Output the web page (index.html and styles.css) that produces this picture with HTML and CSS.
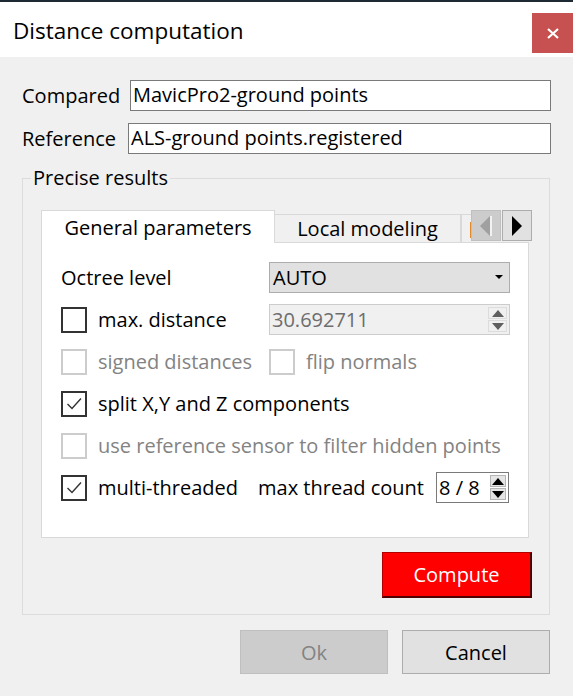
FILE: index.html
```html
<!DOCTYPE html>
<html>
<head>
<meta charset="utf-8">
<link rel="stylesheet" href="styles.css">
</head>
<body>
<div class="window">
  <div class="topstrip"></div>
  <header class="titlebar">
    <span class="title">Distance computation</span>
    <div class="close"><svg width="12" height="11" viewBox="0 0 12 11"><path d="M1 1 L11 10 M11 1 L1 10" stroke="#fff" stroke-width="2.2" fill="none"/></svg></div>
  </header>
  <main class="body">
    <div class="field-row">
      <span class="field-label compared">Compared</span>
      <div class="textbox">MavicPro2-ground points</div>
    </div>
    <div class="field-row second">
      <span class="field-label">Reference</span>
      <div class="textbox">ALS-ground points.registered</div>
    </div>

    <section class="group">
      <span class="group-title">Precise results</span>
      <div class="tabs">
        <div class="tabbar">
          <div class="tab selected">General parameters</div>
          <div class="tab">Local modeling</div>
          <div class="tab partial"><span class="orange"></span></div>
          <div class="scroll-btn disabled"><svg width="14" height="22" viewBox="0 0 14 22"><path d="M11 1 L1 11 L11 21 Z" fill="#a0a0a0"/><path d="M12 1 L12 21" stroke="#fff" stroke-width="1.5"/></svg></div>
          <div class="scroll-btn"><svg width="12" height="20" viewBox="0 0 12 20"><path d="M1 0 L11 10 L1 20 Z" fill="#000"/></svg></div>
        </div>
        <div class="pane">
          <div class="grid">
            <span class="text">Octree level</span>
            <div class="combo"><span>AUTO</span><svg width="8" height="5" viewBox="0 0 8 5"><path d="M0 0 L8 0 L4 4 Z" fill="#000"/></svg></div>

            <label class="check"><span class="box"></span><span>max. distance</span></label>
            <div class="spin disabled"><span>30.692711</span>
              <div class="spin-btns">
                <div class="sb"><svg width="12" height="7" viewBox="0 0 12 7"><path d="M0 7 L6 0 L12 7 Z" fill="#5f5f5f"/></svg></div>
                <div class="sb"><svg width="12" height="7" viewBox="0 0 12 7"><path d="M0 0 L12 0 L6 7 Z" fill="#5f5f5f"/></svg></div>
              </div>
            </div>

            <label class="check off"><span class="box"></span><span>signed distances</span></label>
            <label class="check off"><span class="box"></span><span>flip normals</span></label>

            <label class="check wide"><span class="box"><svg width="22" height="22" viewBox="0 0 22 22"><path d="M4.5 11 L9 15.5 L18 5.5" stroke="#333" stroke-width="1.4" fill="none"/></svg></span><span>split X,Y and Z components</span></label>

            <label class="check off wide"><span class="box"></span><span>use reference sensor to filter hidden points</span></label>

            <div class="multi-row">
              <label class="check"><span class="box"><svg width="22" height="22" viewBox="0 0 22 22"><path d="M4.5 11 L9 15.5 L18 5.5" stroke="#333" stroke-width="1.4" fill="none"/></svg></span><span>multi-threaded</span></label>
              <span class="text thread-label">max thread count</span>
              <div class="spin small"><span>8 / 8</span>
                <div class="spin-btns">
                  <div class="sb"><svg width="12" height="7" viewBox="0 0 12 7"><path d="M0 7 L6 0 L12 7 Z" fill="#000"/></svg></div>
                  <div class="sb"><svg width="12" height="7" viewBox="0 0 12 7"><path d="M0 0 L12 0 L6 7 Z" fill="#000"/></svg></div>
                </div>
              </div>
            </div>
          </div>
        </div>
      </div>
      <div class="compute-row"><div class="btn-compute">Compute</div></div>
    </section>

    <div class="dialog-buttons">
      <div class="btn disabled">Ok</div>
      <div class="btn">Cancel</div>
    </div>
  </main>
</div>
</body>
</html>
```
FILE: styles.css
```css
* { box-sizing: border-box; }
html, body { margin: 0; padding: 0; }
body {
  width: 573px;
  height: 696px;
  background: #f0f0f0;
  font-family: "Open Sans", "Noto Sans", sans-serif;
  font-size: 20px;
  color: #000;
  overflow: hidden;
}
.window { width: 573px; height: 696px; background: #f0f0f0; }
.topstrip { height: 2px; background: #1d2a34; }
.titlebar {
  height: 55px;
  background: #fff;
  display: flex;
  justify-content: space-between;
  align-items: flex-start;
}
.title {
  font-size: 22.5px;
  padding-left: 13px;
  line-height: 55px;
  margin-top: 1px;
}
.close {
  width: 41px;
  height: 40px;
  margin-top: 11px;
  background: #c75050;
  display: flex;
  align-items: center;
  justify-content: center;
}
.body { padding: 23px 22px 0 22px; }
.field-row { display: flex; align-items: center; height: 31px; }
.field-row.second { margin-top: 12px; }
.field-label { width: 106px; flex-shrink: 0; white-space: nowrap; }
.field-label.compared { width: 108px; }
.textbox {
  flex: 1;
  height: 31px;
  background: #fff;
  border: 1px solid #7a7a7a;
  padding-left: 2px;
  line-height: 28px;
  white-space: nowrap;
}
.group {
  margin-top: 24px;
  margin-right: 1px;
  border: 1px solid #dcdcdc;
  padding: 0 17px 16px 18px;
}
.group-title {
  display: block;
  width: max-content;
  margin: -13px 0 0 -10px;
  padding: 0 2px;
  background: #f0f0f0;
  line-height: 24px;
  height: 24px;
}
.tabs { margin-top: 20px; width: 488px; }
.tabbar {
  display: flex;
  align-items: flex-end;
  height: 32px;
}
.tab {
  flex-shrink: 0;
  height: 28px;
  width: 186px;
  border: 1px solid #d9d9d9;
  border-left: none;
  border-bottom: none;
  background: #f0f0f0;
  text-align: center;
  line-height: 28px;
  white-space: nowrap;
}
.tab.selected {
  width: 234px;
  height: 33px;
  margin-bottom: -1px;
  border-left: 1px solid #d9d9d9;
  background: #fff;
  position: relative;
  z-index: 1;
  line-height: 33px;
}
.tab.partial {
  width: 10px;
  border-left: 1px solid #d9d9d9;
  border-right: none;
  display: flex;
  justify-content: flex-end;
  align-items: center;
}
.orange { width: 1px; height: 16px; background: #e08a2a; margin-top: 2px; }
.scroll-btn {
  flex-shrink: 0;
  width: 30px;
  height: 31px;
  margin-bottom: 1px;
  border: 1px solid #adadad;
  background: #e1e1e1;
  display: flex;
  align-items: center;
  justify-content: center;
}
.scroll-btn.disabled {
  background: #cccccc;
  border-color: #bfbfbf;
  margin-right: 1px;
}
.pane {
  background: #fff;
  border: 1px solid #d9d9d9;
  height: 296px;
  padding: 19px 18px 0 19px;
}
.grid {
  display: grid;
  grid-template-columns: 208px 241px;
  grid-auto-rows: 31px;
  row-gap: 11px;
  align-items: center;
}
.text { white-space: nowrap; }
.combo {
  height: 31px;
  background: #e1e1e1;
  border: 1px solid #adadad;
  display: flex;
  align-items: center;
  justify-content: space-between;
  padding: 0 6px 0 3px;
}
.check {
  display: flex;
  align-items: center;
  gap: 11px;
  white-space: nowrap;
}
.check .box {
  width: 26px;
  height: 26px;
  border: 2px solid #333;
  background: #fff;
  flex-shrink: 0;
  display: flex;
  align-items: center;
  justify-content: center;
}
.check.off { color: #838383; }
.check.off .box { border-color: #cccccc; }
.wide { grid-column: 1 / 3; }
.spin {
  height: 31px;
  border: 1px solid #7a7a7a;
  background: #fff;
  display: flex;
  align-items: center;
  justify-content: space-between;
  padding-left: 2px;
}
.spin.disabled {
  background: #f0f0f0;
  border-color: #cccccc;
  color: #6d6d6d;
}
.spin-btns {
  display: flex;
  flex-direction: column;
  height: 100%;
  padding: 2px 2px 2px 0;
  gap: 1px;
}
.sb {
  width: 19px;
  flex: 1;
  display: flex;
  align-items: center;
  justify-content: center;
  border: 1px solid #d8d8d8;
  background: #f4f4f4;
}
.spin.disabled .sb { background: #f0f0f0; border-color: #dcdcdc; }
.spin.small { width: 73px; }
.spin.small .sb { width: 16px; background: #e5e5e5; border-color: #b5b5b5; }
.multi-row {
  grid-column: 1 / 3;
  display: flex;
  align-items: center;
  height: 31px;
}
.thread-label { margin-left: auto; margin-right: 12px; }
.multi-row .spin { margin-right: 1px; }
.compute-row {
  display: flex;
  justify-content: flex-end;
  margin-top: 14px;
}
.btn-compute {
  width: 150px;
  height: 46px;
  background: #ff0000;
  border: 1px solid #b00000;
  border-right: 2px solid #500000;
  border-bottom: 2px solid #500000;
  color: #fff;
  font-size: 20px;
  display: flex;
  align-items: center;
  justify-content: center;
}
.dialog-buttons {
  display: flex;
  justify-content: flex-end;
  gap: 14px;
  margin-top: 15px;
  margin-right: 1px;
}
.btn {
  width: 148px;
  height: 44px;
  background: #e1e1e1;
  border: 1px solid #adadad;
  display: flex;
  align-items: center;
  justify-content: center;
  font-size: 20px;
}
.btn.disabled {
  background: #cccccc;
  border-color: #bfbfbf;
  color: #838383;
}
```
